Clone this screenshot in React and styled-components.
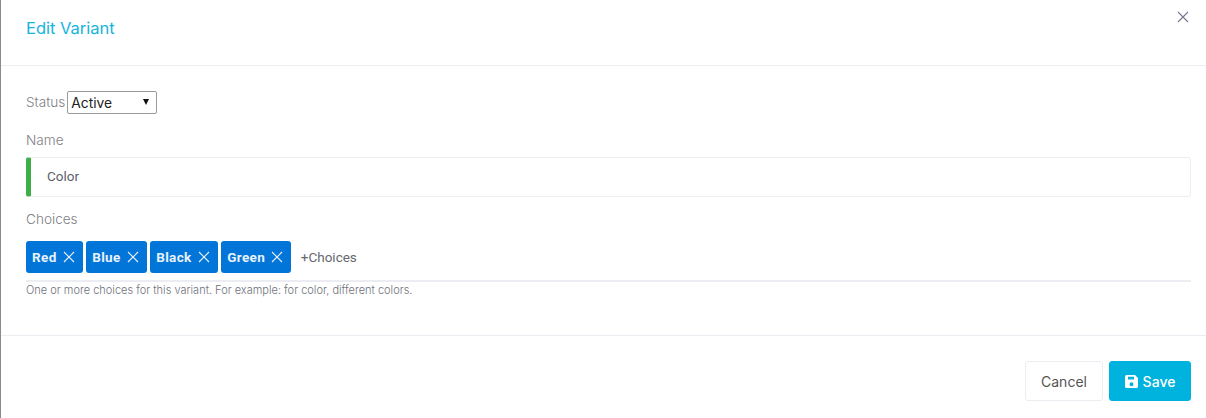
import React from 'react';
import styled, { createGlobalStyle } from 'styled-components';

const GlobalStyle = createGlobalStyle`
    html, body {
        margin: 0;
        padding: 0;
        background: #fff;
    }
    * {
        box-sizing: border-box;
    }
`;

const Modal = styled.div`
    width: 1206px;
    height: 418px;
    border-left: 1px solid #8a8a8a;
    background: #fff;
    font-family: Inter, 'Liberation Sans', sans-serif;
    display: flex;
    flex-direction: column;
`;

const Header = styled.header`
    height: 66px;
    padding: 18px 25px 0;
    border-bottom: 1px solid #ebedf2;
    position: relative;
`;

const Title = styled.h5`
    margin: 0;
    font-size: 16.500px;
    line-height: 21px;
    font-weight: 400;
    color: #14b4dc;
`;

const Close = styled.button`
    position: absolute;
    top: 11px;
    right: 17px;
    padding: 0;
    width: 12px;
    height: 12px;
    border: 0;
    background: none;
    color: #74788d;
    display: flex;
`;

const Body = styled.div`
    height: 270px;
    padding: 25px 15px 0 25px;
    border-bottom: 1px solid #ebedf2;
`;

const StatusRow = styled.div`
    display: flex;
    align-items: center;
    height: 23px;
`;

const Label = styled.label`
    font-size: 13.600px;
    font-weight: 300;
    color: #808086;
    line-height: 19px;
    display: block;
`;

const SelectWrap = styled.span`
    position: relative;
    display: block;
    margin-left: 2px;
    width: 90px;
    height: 23px;
    &::after {
        content: '';
        position: absolute;
        top: 8px;
        right: 8px;
        border-style: solid;
        border-width: 6px 3.500px 0;
        border-color: #111 transparent transparent;
        pointer-events: none;
    }
`;

const StatusSelect = styled.select`
    appearance: none;
    width: 100%;
    height: 100%;
    padding: 0 0 0 3px;
    font-family: Inter, sans-serif;
    font-size: 13.800px;
    color: #222;
    background: #fff;
    border: 1px solid #9a9a9a;
    border-radius: 2px;
`;

const Field = styled.div`
    margin-top: ${(props) => props.$top}px;
`;

const NameBox = styled.div`
    height: 40px;
    margin-top: 7px;
    border: 1px solid #ebedf2;
    border-left: 5px solid #3fae49;
    border-radius: 3px;
    padding: 0 0 2px 16px;
    display: flex;
    align-items: center;
    font-family: Roboto, sans-serif;
    font-size: 13.500px;
    color: #5c5f6b;
`;

const TagBox = styled.div`
    display: flex;
    align-items: center;
    gap: 3.600px;
    margin-top: 11px;
    height: 33px;
`;

const Tag = styled.span`
    height: 32px;
    padding: 0 8px 0 6px;
    display: flex;
    align-items: center;
    gap: 6px;
    border-radius: 3px;
    background: #0275d8;
    color: #e8f2fb;
    font-family: Roboto, sans-serif;
    font-size: 13.500px;
    font-weight: 700;
    letter-spacing: 0.350px;
`;

const AddChoice = styled.span`
    margin-left: 6px;
    font-family: Roboto, sans-serif;
    font-size: 13.500px;
    color: #66696f;
`;

const Rule = styled.div`
    height: 2px;
    margin-top: 7px;
    background: #ebedf2;
`;

const Hint = styled.div`
    font-size: 11px;
    font-weight: 300;
    line-height: 14px;
    color: #6f727d;
    margin-top: 1px;
`;

const Footer = styled.footer`
    flex: 1;
    display: flex;
    justify-content: flex-end;
    align-items: flex-start;
    gap: 6px;
    padding: 25px 15px 0 0;
`;

const Button = styled.button`
    height: 40px;
    width: ${(props) => props.$width}px;
    display: flex;
    align-items: center;
    justify-content: center;
    gap: 5px;
    border-radius: 3px;
    font-family: Inter, sans-serif;
    font-size: 14px;
    font-weight: ${(props) => (props.$primary ? 500 : 400)};
    color: ${(props) => (props.$primary ? '#fff' : '#555')};
    background: ${(props) => (props.$primary ? '#00b2de' : '#fff')};
    border: 1px solid ${(props) => (props.$primary ? '#00b2de' : '#ebedf2')};
`;

function CrossIcon({ size = 12 }) {
    return (
        <svg width={size} height={size} viewBox="0 0 12 12" fill="none" stroke="currentColor" strokeWidth="1.100">
            <path d="M1 1l10 10M11 1L1 11" />
        </svg>
    );
}

function SaveIcon() {
    return (
        <svg width="13" height="13" viewBox="0 0 13 13" fill="#fff">
            <path
                fillRule="evenodd"
                d="M1.500 0H10l3 3v8.500A1.500 1.500 0 0 1 11.500 13h-10A1.500 1.500 0 0 1 0 11.500v-10A1.500 1.500 0 0 1 1.500 0zM3 1.800V4.500h6V1.800H3zM6.500 7.200a2 2 0 1 0 0 4 2 2 0 0 0 0-4z"
            />
        </svg>
    );
}

const choices = ['Red', 'Blue', 'Black', 'Green'];

export default function App() {
    return (
        <>
            <GlobalStyle />
            <Modal>
                <Header>
                    <Title>Edit Variant</Title>
                    <Close aria-label="Close">
                        <CrossIcon />
                    </Close>
                </Header>
                <Body>
                    <StatusRow>
                        <Label>Status</Label>
                        <SelectWrap>
                            <StatusSelect defaultValue="Active">
                                <option>Active</option>
                                <option>Inactive</option>
                            </StatusSelect>
                        </SelectWrap>
                    </StatusRow>
                    <Field $top={17}>
                        <Label>Name</Label>
                        <NameBox>Color</NameBox>
                    </Field>
                    <Field $top={13}>
                        <Label>Choices</Label>
                        <TagBox>
                            {choices.map((choice) => (
                                <Tag key={choice}>
                                    {choice}
                                    <CrossIcon />
                                </Tag>
                            ))}
                            <AddChoice>+Choices</AddChoice>
                        </TagBox>
                        <Rule />
                        <Hint>One or more choices for this variant. For example: for color, different colors.</Hint>
                    </Field>
                </Body>
                <Footer>
                    <Button $width={78}>Cancel</Button>
                    <Button $width={82} $primary>
                        <SaveIcon />
                        Save
                    </Button>
                </Footer>
            </Modal>
        </>
    );
}
